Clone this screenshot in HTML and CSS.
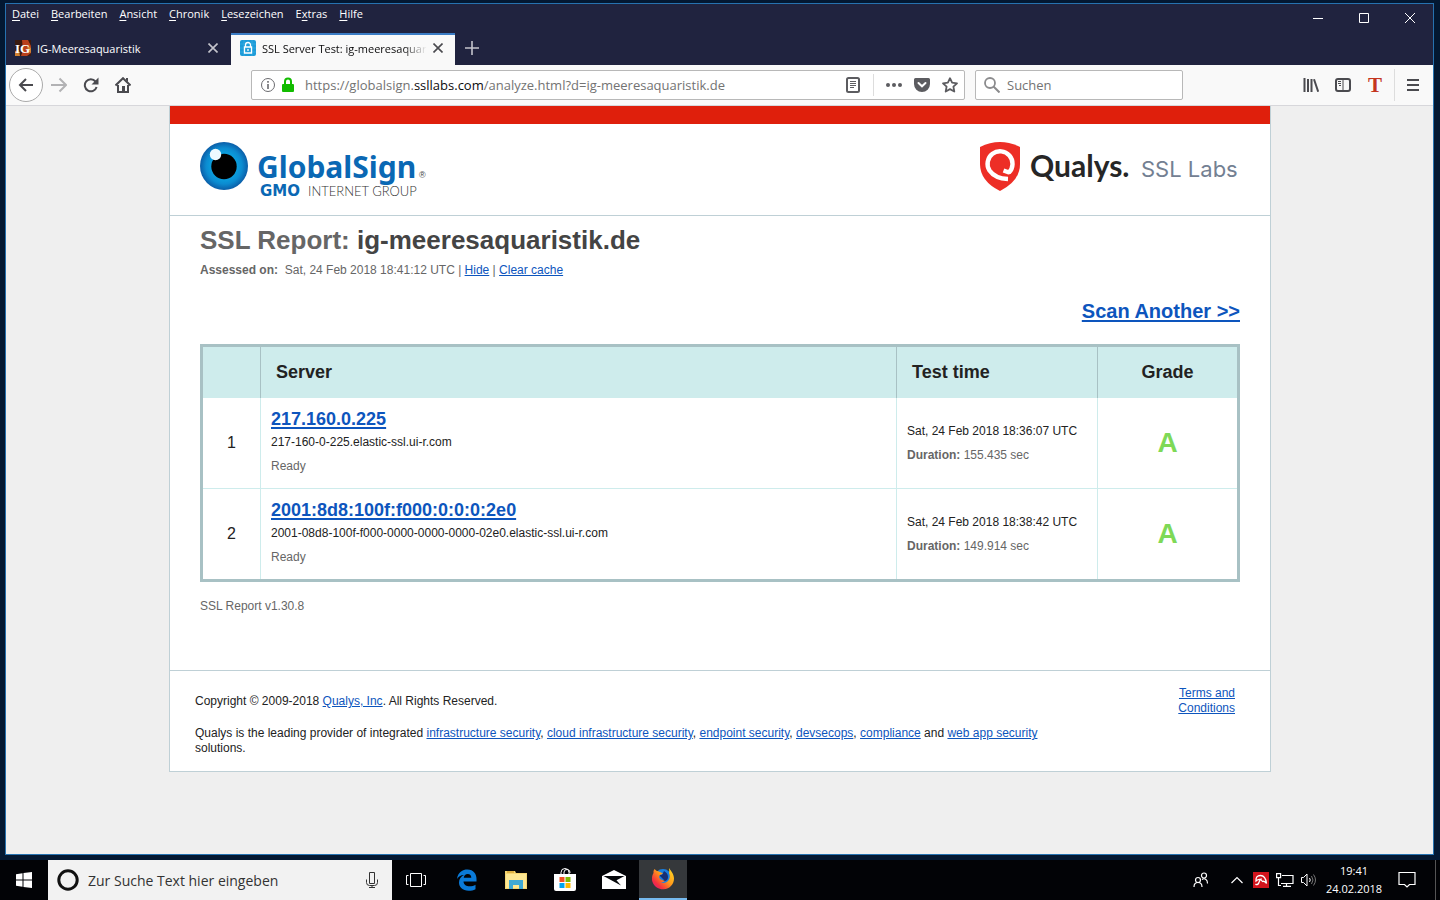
FILE: index.html
```html
<!DOCTYPE html>
<html lang="de">
<head>
  <meta charset="UTF-8" />
  <meta name="viewport" content="width=device-width, initial-scale=1.0"/>
  <title>SSL Server Test: ig-meeresaquaristik.de</title>
  <link rel="stylesheet" href="styles.css">
</head>
<body>
  <div class="browser">
    <!-- Title bar: menu and window buttons -->
    <header class="titlebar">
      <nav class="menu">
        <button><u>D</u>atei</button>
        <button><u>B</u>earbeiten</button>
        <button><u>A</u>nsicht</button>
        <button><u>C</u>hronik</button>
        <button><u>L</u>esezeichen</button>
        <button>E<u>x</u>tras</button>
        <button><u>H</u>ilfe</button>
      </nav>
      <div class="window-buttons">
        <button aria-label="Minimieren"><svg width="12" height="12" viewBox="0 0 12 12"><path d="M1 6.500h10" /></svg></button>
        <button aria-label="Maximieren"><svg width="12" height="12" viewBox="0 0 12 12"><path d="M1.500 1.500h9v9h-9z" /></svg></button>
        <button aria-label="Schließen"><svg width="12" height="12" viewBox="0 0 12 12"><path d="M1 1l10 10M11 1L1 11" /></svg></button>
      </div>
    </header>

    <!-- Tabs -->
    <div class="tabs">
      <div class="tab">
        <svg class="favicon" width="16" height="16" viewBox="0 0 16 16">
          <rect width="16" height="16" fill="#3a1a10"/>
          <path d="M7 0h6l3 6v7l-4 3H6l2-6z" fill="#b8401c"/>
          <path d="M0 11l4-1 1 6H0zM12 5l4 3v5l-3-2z" fill="#d08030"/>
          <text x="0" y="13" class="favicon-text">IG</text>
        </svg>
        <span class="tab-title">IG-Meeresaquaristik</span>
        <button class="tab-close" aria-label="Tab schließen"><svg width="10" height="10" viewBox="0 0 10 10"><path d="M0.500 0.500l9 9M9.500 0.500l-9 9" /></svg></button>
      </div>
      <div class="tab active">
        <svg class="favicon" width="16" height="16" viewBox="0 0 16 16">
          <rect width="16" height="16" rx="2" fill="#1c9bd8"/>
          <path d="M0 4h16M0 8h16M0 12h16M4 0v16M12 0v16" stroke="#3fb4e6" stroke-width=".6"/>
          <path d="M5.500 7V5a2.500 2.500 0 015 0v2M4.500 7h7v6h-7zM8 9v2" fill="none" stroke="#fff" stroke-width="1.300"/>
        </svg>
        <span class="tab-title">SSL Server Test: ig-meeresaquaristik.de</span>
        <button class="tab-close" aria-label="Tab schließen"><svg width="10" height="10" viewBox="0 0 10 10"><path d="M0.500 0.500l9 9M9.500 0.500l-9 9" /></svg></button>
      </div>
      <button class="new-tab" aria-label="Neuer Tab"><svg width="14" height="14" viewBox="0 0 14 14"><path d="M7 0v14M0 7h14" /></svg></button>
    </div>

    <!-- Navigation toolbar -->
    <div class="toolbar">
      <button class="back" aria-label="Zurück"><svg width="16" height="16" viewBox="0 0 16 16"><path d="M15 8H2M8 2L2 8l6 6" class="line"/></svg></button>
      <button class="tool disabled" aria-label="Vor"><svg width="16" height="16" viewBox="0 0 16 16"><path d="M0 8h14M8.500 1.500L15 8l-6.500 6.500" class="line"/></svg></button>
      <button class="tool" aria-label="Neu laden"><svg width="16" height="16" viewBox="0 0 16 16"><path d="M12.500 4.500A6 6 0 1013.600 10" class="line"/><path d="M15.500 0.500v7h-7z" fill="#4a4a4f"/></svg></button>
      <button class="tool" aria-label="Startseite"><svg width="16" height="16" viewBox="0 0 16 16"><path d="M0.500 8.500L8 1.200l7.500 7.300M3 8v7h10V8" class="line"/><path d="M7 9h3v6H7zM11 1h2v4l-2-2z" fill="#4a4a4f"/></svg></button>
      <div class="spring"></div>
      <div class="urlbar">
        <svg width="16" height="16" viewBox="0 0 16 16"><circle cx="8" cy="8" r="6.500" fill="none" stroke="#6b6b6f"/><path d="M8 7v5M8 4v1.700" stroke="#6b6b6f" stroke-width="1.600"/></svg>
        <svg class="lock" width="14" height="16" viewBox="0 0 14 16"><path d="M4 8V4.500a3 3 0 016 0V8" fill="none" stroke="#12bc00" stroke-width="2"/><rect x="1" y="7" width="12" height="8" rx="1" fill="#12bc00"/></svg>
        <div class="url" role="textbox" contenteditable="true" spellcheck="false" aria-label="Adresse">https://globalsign.<b>ssllabs.com</b>/analyze.html?d=ig-meeresaquaristik.de</div>
        <button aria-label="Leseansicht"><svg width="16" height="16" viewBox="0 0 16 16"><rect x="2" y="1" width="12" height="14" rx="1.500" fill="none" stroke="#5c5c60" stroke-width="2"/><path d="M5 4.500h6M5 6.500h6M5 8.500h6M5 10.500h4" stroke="#5c5c60"/></svg></button>
        <span class="url-divider"></span>
        <button aria-label="Aktionen"><svg width="16" height="16" viewBox="0 0 16 16" fill="#5c5c60"><circle cx="2" cy="8" r="2"/><circle cx="8" cy="8" r="2"/><circle cx="14" cy="8" r="2"/></svg></button>
        <button aria-label="Pocket"><svg width="16" height="16" viewBox="0 0 16 16"><path d="M1.500 1h13a1.500 1.500 0 011.500 1.500V7a8 8 0 01-16 0V2.500A1.500 1.500 0 011.500 1z" fill="#5c5c60"/><path d="M4.500 6L8 9.300 11.500 6" fill="none" stroke="#fff" stroke-width="2" stroke-linecap="round"/></svg></button>
        <button aria-label="Lesezeichen"><svg width="16" height="16" viewBox="0 0 16 16"><path d="M8 1.200l2.100 4.500 4.900.6-3.600 3.300.9 4.900L8 12.100l-4.300 2.400.9-4.900L1 6.300l4.900-.6z" fill="none" stroke="#5c5c60" stroke-width="1.800" stroke-linejoin="round"/></svg></button>
      </div>
      <label class="searchbar">
        <svg width="16" height="16" viewBox="0 0 16 16"><circle cx="6" cy="6" r="5" fill="none" stroke="#8b8b8d" stroke-width="1.800"/><path d="M9.500 9.500L15.500 15.500" stroke="#8b8b8d" stroke-width="2"/></svg>
        <input type="text" placeholder="Suchen" aria-label="Suchen">
      </label>
      <div class="spring"></div>
      <button class="tool" aria-label="Bibliothek"><svg width="16" height="16" viewBox="0 0 16 16"><path d="M1.500 1v14M5 2v13M8.500 2v13M11 2.200l4.200 12.500" stroke="#4a4a4f" stroke-width="2"/></svg></button>
      <button class="tool" aria-label="Seitenleiste"><svg width="16" height="16" viewBox="0 0 16 16"><rect x="1" y="2" width="14" height="12" rx="2" class="line"/><path d="M8 2v12" stroke="#4a4a4f"/><path d="M3 4.500h3M3 6.500h3M4 8.500h2" stroke="#4a4a4f"/></svg></button>
      <button class="tool letter" aria-label="Erweiterung">T</button>
      <button class="tool menu-button" aria-label="Menü"><svg width="12" height="12" viewBox="0 0 12 12"><path d="M0 1h12M0 6h12M0 11h12" class="line"/></svg></button>
    </div>

    <!-- Web page -->
    <main class="viewport">
      <div class="page">
        <div class="red-bar"></div>
        <div class="logos">
          <svg width="240" height="60" viewBox="0 0 240 60" role="img" aria-label="GlobalSign">
            <defs>
              <radialGradient id="iris">
                <stop offset="45%" stop-color="#0aa5e2"/>
                <stop offset="75%" stop-color="#0c8bd0"/>
                <stop offset="100%" stop-color="#0b5ea8"/>
              </radialGradient>
            </defs>
            <circle cx="24" cy="24" r="24" fill="url(#iris)"/>
            <circle cx="24" cy="24.500" r="12.700" fill="#000"/>
            <circle cx="15.500" cy="12.500" r="5.700" fill="#eefaff"/>
            <text x="57" y="36" class="globalsign">GlobalSign</text>
            <text x="219" y="36" class="registered">®</text>
            <text x="60" y="54" class="gmo">GMO</text>
            <text x="108" y="54" class="internet-group">INTERNET GROUP</text>
          </svg>
          <svg width="260" height="60" viewBox="0 0 260 60" role="img" aria-label="Qualys SSL Labs">
            <path d="M0 5Q20-5 40 5v17q0 17-20 27Q0 39 0 22z" fill="#ed2e26"/>
            <path d="M23.500 28.500L29 30.500A12.500 12.500 0 1 0 9.500 28.500Q15 36.500 28 37" fill="none" stroke="#fff" stroke-width="4.400" stroke-linejoin="bevel"/>
            <text x="50" y="35" class="qualys">Qualys.</text>
            <text x="161" y="35" class="ssl-labs">SSL Labs</text>
          </svg>
        </div>

        <div class="report">
          <h1>SSL Report: <span>ig-meeresaquaristik.de</span></h1>
          <p class="assessed"><b>Assessed on:</b>&nbsp; Sat, 24 Feb 2018 18:41:12 UTC | <a href="#">Hide</a> | <a href="#">Clear cache</a></p>
          <p class="scan"><a href="#">Scan Another &gt;&gt;</a></p>

          <table class="servers">
            <thead>
              <tr><th class="num"></th><th>Server</th><th class="time">Test time</th><th class="grade">Grade</th></tr>
            </thead>
            <tbody>
              <tr>
                <td class="num">1</td>
                <td>
                  <a class="ip" href="#">217.160.0.225</a>
                  <p>217-160-0-225.elastic-ssl.ui-r.com</p>
                  <p class="muted">Ready</p>
                </td>
                <td class="time">
                  <p>Sat, 24 Feb 2018 18:36:07 UTC</p>
                  <p class="muted"><b>Duration:</b> 155.435 sec</p>
                </td>
                <td class="grade">A</td>
              </tr>
              <tr>
                <td class="num">2</td>
                <td>
                  <a class="ip" href="#">2001:8d8:100f:f000:0:0:0:2e0</a>
                  <p>2001-08d8-100f-f000-0000-0000-0000-02e0.elastic-ssl.ui-r.com</p>
                  <p class="muted">Ready</p>
                </td>
                <td class="time">
                  <p>Sat, 24 Feb 2018 18:38:42 UTC</p>
                  <p class="muted"><b>Duration:</b> 149.914 sec</p>
                </td>
                <td class="grade">A</td>
              </tr>
            </tbody>
          </table>
          <p class="version">SSL Report v1.30.8</p>
        </div>

        <footer class="footer">
          <div class="footer-text">
            <p>Copyright © 2009-2018 <a href="#">Qualys, Inc</a>. All Rights Reserved.</p>
            <p>Qualys is the leading provider of integrated <a href="#">infrastructure security</a>, <a href="#">cloud infrastructure security</a>, <a href="#">endpoint security</a>, <a href="#">devsecops</a>, <a href="#">compliance</a> and <a href="#">web app security</a> solutions.</p>
          </div>
          <a class="terms" href="#">Terms and Conditions</a>
        </footer>
      </div>
    </main>
  </div>

  <!-- Windows taskbar -->
  <div class="taskbar">
    <button class="task" aria-label="Start"><svg width="16" height="16" viewBox="0 0 16 16" fill="#fff"><path d="M0 2.200L6.500 1.300v6.200H0zM7.500 1.100L16 0v7.500H7.500zM0 8.500h6.500v6.200L0 13.800zM7.500 8.500H16V16l-8.500-1.100z"/></svg></button>
    <label class="cortana">
      <svg width="22" height="22" viewBox="0 0 22 22"><circle cx="11" cy="11" r="9.200" fill="none" stroke="#111" stroke-width="3"/></svg>
      <input type="text" placeholder="Zur Suche Text hier eingeben" aria-label="Suche">
      <svg width="12" height="16" viewBox="0 0 12 16" fill="none" stroke="#333"><path d="M3.500 0.500h5v11h-5zM0.500 7.500v3q0 3 3 3h5q3 0 3-3v-3M6 13.500v2M3 15.500h6"/></svg>
    </label>
    <div class="apps">
      <button class="task task-view" aria-label="Taskansicht"><svg width="20" height="14" viewBox="0 0 20 14" fill="none" stroke="#fff"><path d="M4.500 0.500h11v13h-11zM2.500 2.500h-2v9h2M17.500 2.500h2v9h-2"/></svg></button>
      <button class="task" aria-label="Edge"><svg width="22" height="22" viewBox="0 0 22 22"><path d="M1 10C2 3 6.500 0.500 11.500 0.500c6 0 9 4.500 9 9.500v2.500H7.500c.3 3.500 3 4.800 6 4.800 2.500 0 4.300-.6 6-1.600v4.500c-2 1.100-4.300 1.500-6.800 1.500C6.500 21.700 3 18 3 13.500 3 10 5 7.300 8 6 4.500 6 2.300 8 1 10zM7.700 8.700h7.600c0-2.500-1.300-3.800-3.600-3.800-2.200 0-3.600 1.500-4 3.800z" fill="#0a7ad8"/></svg></button>
      <button class="task" aria-label="Explorer"><svg width="22" height="20" viewBox="0 0 22 20"><path d="M0 1h10l1 2h11v16H0z" fill="#f5d571"/><path d="M1 4h20v14H1z" fill="#fde793"/><path d="M2 1.500h7v1H2z" fill="#c98d15"/><path d="M4 10h14v9h-4v-4H8v4H4z" fill="#3fa9d5"/></svg></button>
      <button class="task" aria-label="Store"><svg width="24" height="24" viewBox="0 0 24 24"><path d="M8 6V4.500a4 4 0 018 0V6M11 6V4a3 3 0 016 1" fill="none" stroke="#fff"/><path d="M1 6h22v15q0 2-2 2H3q-2 0-2-2z" fill="#fff"/><path d="M6.500 9h5v5h-5z" fill="#f25022"/><path d="M12.500 9h5v5h-5z" fill="#7fba00"/><path d="M6.500 15h5v5h-5z" fill="#00a4ef"/><path d="M12.500 15h5v5h-5z" fill="#ffb900"/></svg></button>
      <button class="task" aria-label="Mail"><svg width="24" height="20" viewBox="0 0 24 20"><path d="M0 6L12 0l12 6v13H0z" fill="#fff"/><path d="M1.500 6h21l-8 4.300 4.500 5.200L1.500 6z" fill="#05070a"/></svg></button>
      <button class="task running" aria-label="Firefox">
        <svg width="24" height="24" viewBox="0 0 24 24">
          <defs>
            <linearGradient id="fox" x1="1" y1="0" x2="0" y2="1">
              <stop offset="0" stop-color="#ffe226"/>
              <stop offset="45%" stop-color="#ff9a1a"/>
              <stop offset="75%" stop-color="#f5303f"/>
              <stop offset="100%" stop-color="#d6108c"/>
            </linearGradient>
          </defs>
          <circle cx="12" cy="10.500" r="8.500" fill="#1a7fe0"/>
          <path d="M13 4q4 2 4 6c0 4-4 5-6 4l2-1-3-3-3-3 4 1z" fill="#182f74"/>
          <path d="M3.500 2Q2 4 2.500 6 0 10 1.500 15c2 5 6.500 7.500 11 7.300C19 22 23 17 23 11.500 23 7 20 4 18 1q.5 3 0 5 2 4-1 8-3 3-7 1.500 2 0 4-1.500l-3-1-2-1-1-2q0-2 2-2.500l2-1-4-2Q5 4 3.500 2z" fill="url(#fox)"/>
        </svg>
      </button>
    </div>
    <div class="tray">
      <button class="tray-people" aria-label="Kontakte"><svg width="16" height="16" viewBox="0 0 16 16" fill="none" stroke="#fff" stroke-width="1.200"><circle cx="5" cy="8" r="2.500"/><circle cx="11" cy="3.500" r="2.500"/><path d="M1 15q0-4.500 4-4.500t4 4.500M9 7.500q2-1.500 4 0 1.500 1 1.500 4"/></svg></button>
      <button aria-label="Mehr"><svg width="12" height="8" viewBox="0 0 12 8" fill="none" stroke="#fff" stroke-width="1.200"><path d="M0.500 7L6 1.500 11.500 7"/></svg></button>
      <button aria-label="Avira"><svg width="16" height="16" viewBox="0 0 16 16"><rect width="16" height="16" fill="#d3141c"/><path d="M3 9Q2.500 3.500 7.500 3.500T13.500 11.500Q11.500 8.500 9.500 9.500 7 5.500 3 9zM8.500 6.500Q6.500 8 5.500 11.500 4 13.500 2.500 12" fill="none" stroke="#fff" stroke-width="1.300"/></svg></button>
      <button aria-label="Netzwerk"><svg width="18" height="14" viewBox="0 0 18 14" fill="none" stroke="#fff" stroke-width="1.200"><path d="M6 2.500h11v8H5M0.600 0.600h4v4h-4zM2.500 5v7.500h2.500M10.500 10.500v3M7 13.400h8"/></svg></button>
      <button aria-label="Lautstärke"><svg width="16" height="14" viewBox="0 0 16 14" fill="none" stroke="#fff"><path d="M0.500 4.500h2L6 1v12L2.500 9.500h-2zM8.500 5q1.500 2 0 4"/><path d="M10.500 3q3 4 0 8M12.500 1.500q4 5.500 0 11" stroke="#777"/></svg></button>
      <div class="clock"><span>19:41</span><span>24.02.2018</span></div>
      <button class="tray-notes" aria-label="Info-Center"><svg width="18" height="18" viewBox="0 0 18 18" fill="none" stroke="#fff" stroke-width="1.200"><path d="M1 1.500h16v12h-5.500L9 16l-2.500-2.500H1z"/></svg></button>
    </div>
  </div>
</body>
</html>
```
FILE: styles.css
```css
* {
  box-sizing: border-box;
}

body {
  margin: 0;
  min-height: 100vh;
  display: flex;
  flex-direction: column;
  background: #031832;
  font-family: "Open Sans", "Noto Sans", sans-serif;
  font-size: 12px;
}

h1, p {
  margin: 0;
}

button {
  border: none;
  padding: 0;
  background: none;
  color: inherit;
  font: inherit;
  display: flex;
  align-items: center;
  justify-content: center;
}

input {
  border: none;
  outline: none;
  padding: 0;
  background: none;
  font: inherit;
  flex: 1;
  min-width: 0;
}

/* Browser window */
.browser {
  flex: 1;
  margin: 3px 6px 5px 5px;
  border: 1px solid #2672b0;
  background: #efefef;
  display: flex;
  flex-direction: column;
}

.titlebar {
  display: flex;
  justify-content: space-between;
  height: 29px;
  background: #20233f;
  color: #fff;
}

.menu {
  display: flex;
  align-items: flex-start;
  gap: 12px;
  padding-left: 6px;
  font-size: 11px;
  line-height: 20px;
}

.menu button {
  display: block;
}

.menu u {
  text-underline-offset: 2px;
}

.window-buttons {
  display: flex;
}

.window-buttons button {
  width: 46px;
  height: 28px;
}

.window-buttons svg {
  fill: none;
  stroke: #fff;
}

/* Tabs */
.tabs {
  display: flex;
  height: 32px;
  background: #20233f;
  color: #fff;
}

.tab {
  display: flex;
  align-items: center;
  width: 225px;
  padding: 0 13px 2px 9px;
  font-size: 11px;
}

.tab.active {
  width: 224px;
  padding: 0 12px 4px 9px;
  border-top: 2px solid #3b7cc4;
  background: #f9f9f9;
  color: #0c0c0d;
}

.favicon {
  flex: none;
  margin-right: 6px;
}

.favicon-text {
  font: bold 13px "Liberation Serif", serif;
  fill: #fff;
}

.tab-title {
  flex: 1;
  overflow: hidden;
  white-space: nowrap;
}

.active .tab-title {
  mask-image: linear-gradient(to left, transparent, #000 24px);
}

.tab-close {
  margin-left: 6px;
}

.tab-close svg,
.new-tab svg {
  stroke: #c4c4cc;
  stroke-width: 1.6;
}

.active .tab-close svg {
  stroke: #4a4a4f;
}

.new-tab {
  width: 34px;
  height: 30px;
}

/* Toolbar */
.toolbar {
  display: flex;
  align-items: center;
  height: 41px;
  padding: 0 2px 0 3px;
  background: #f9f9f9;
  border-bottom: 1px solid #d7d7db;
}

.line {
  fill: none;
  stroke: #4a4a4f;
  stroke-width: 2;
}

.back {
  width: 34px;
  height: 34px;
  border: 1px solid #aaa;
  border-radius: 50%;
  background: #fff;
}

.tool {
  width: 32px;
  height: 32px;
}

.disabled {
  opacity: 0.4;
}

.letter {
  font: bold 21px "Liberation Serif", serif;
  color: #c4361f;
}

.menu-button {
  width: 37px;
  border-left: 1px solid #ddd;
  margin-left: 3px;
}

.spring {
  width: 112px;
}

.urlbar,
.searchbar {
  display: flex;
  align-items: center;
  height: 30px;
  border: 1px solid #b8b8b8;
  border-radius: 2px;
  background: #fff;
  font-size: 13px;
  color: #737373;
}

.urlbar {
  flex: 1;
  padding: 0 6px 0 8px;
  gap: 12px;
}

.urlbar .lock {
  margin: 0 -2px 0 -7px;
}

.url {
  flex: 1;
  white-space: nowrap;
  overflow: hidden;
  outline: none;
}

.url b {
  font-weight: normal;
  color: #0c0c0d;
}

.url-divider {
  width: 1px;
  height: 22px;
  background: #ddd;
}

.searchbar {
  width: 208px;
  margin-left: 10px;
  padding: 0 8px;
  gap: 7px;
}

.searchbar input::placeholder {
  color: #737373;
}

/* Page */
.viewport {
  flex: 1;
  padding-left: 1px;
  font-family: "Liberation Sans", Arial, sans-serif;
}

.page {
  max-width: 1102px;
  margin: 0 auto;
  border: 1px solid #bfd0d6;
  border-top: none;
  background: #fff;
  color: #222;
}

.page a {
  color: #0d55bd;
}

.red-bar {
  height: 18px;
  background: #df1f0c;
}

.logos {
  display: flex;
  justify-content: space-between;
  padding: 18px 30px 13px;
  border-bottom: 1px solid #bfd0d6;
}

.globalsign {
  font: bold 30px "Noto Sans", sans-serif;
  fill: #0a68b4;
}

.registered {
  font: 9px "Liberation Sans", sans-serif;
  fill: #444;
}

.gmo {
  font: bold 15px "DejaVu Sans", sans-serif;
  fill: #0a68b4;
}

.internet-group {
  font: 300 13px Lato, sans-serif;
  fill: #333;
}

.qualys {
  font: bold 30px Lato, sans-serif;
  fill: #262626;
}

.ssl-labs {
  font: 22px Inter, sans-serif;
  fill: #738092;
}

.report {
  padding: 8px 30px 0;
}

.report h1 {
  font-size: 26px;
  line-height: 32px;
  color: #666;
}

.report h1 span {
  color: #444;
}

.assessed {
  margin-top: 4px;
  line-height: 20px;
  color: #666;
}

.scan {
  margin: 18px 0 20px;
  text-align: right;
  font-size: 20px;
  font-weight: bold;
  line-height: 26px;
}

.scan a,
.ip {
  text-decoration-thickness: 2px;
  text-underline-offset: 2px;
}

.servers {
  width: 100%;
  border: 3px solid #a8c1c4;
  border-spacing: 0;
}

.servers th {
  height: 51px;
  padding: 0 15px;
  background: #ceecec;
  font-size: 18px;
  text-align: left;
}

.servers td {
  padding: 10px;
  line-height: 24px;
}

.servers th + th {
  border-left: 1px solid #a8c1c4;
}

.servers td + td {
  border-left: 1px solid #ceecec;
}

.servers tr:first-child td {
  border-bottom: 1px solid #ceecec;
}

.servers .num {
  width: 57px;
  text-align: center;
  font-size: 16px;
}

.servers .time {
  width: 201px;
}

.servers .grade {
  width: 140px;
  text-align: center;
}

.servers td.grade {
  font-size: 28px;
  font-weight: bold;
  color: #7ed957;
}

.ip {
  display: block;
  font-size: 18px;
  font-weight: bold;
  line-height: 22px;
}

.muted,
.version {
  color: #666;
}

.version {
  margin: 14px 0 54px;
  line-height: 20px;
}

.footer {
  display: flex;
  justify-content: space-between;
  padding: 15px 35px 15px 25px;
  border-top: 1px solid #bfd0d6;
  line-height: 15px;
}

.footer-text {
  max-width: 880px;
  padding-top: 8px;
}

.footer-text p + p {
  margin-top: 17px;
}

.terms {
  width: 80px;
  text-align: right;
}

/* Taskbar */
.taskbar {
  display: flex;
  height: 40px;
  background: #020306;
  color: #fff;
}

.task {
  width: 48px;
  height: 40px;
}

.cortana {
  display: flex;
  align-items: center;
  gap: 9px;
  width: 344px;
  padding: 0 14px 0 9px;
  background: #f2f2f2;
  font-size: 14px;
}

.cortana input::placeholder {
  color: #333;
}

.apps {
  flex: 1;
  display: flex;
  gap: 1px;
}

.task-view {
  margin-right: 2px;
}

.running {
  background: #35383b;
  border-bottom: 2px solid #76b9ed;
}

.tray {
  display: flex;
  align-items: center;
  margin-right: 4px;
  border-right: 1px solid #555;
}

.tray button {
  width: 24px;
  height: 40px;
}

.tray .tray-people {
  width: 48px;
}

.clock {
  display: flex;
  flex-direction: column;
  align-items: center;
  width: 66px;
  font-size: 11px;
  line-height: 18px;
}

.tray .tray-notes {
  width: 40px;
  margin-right: 8px;
}
```
